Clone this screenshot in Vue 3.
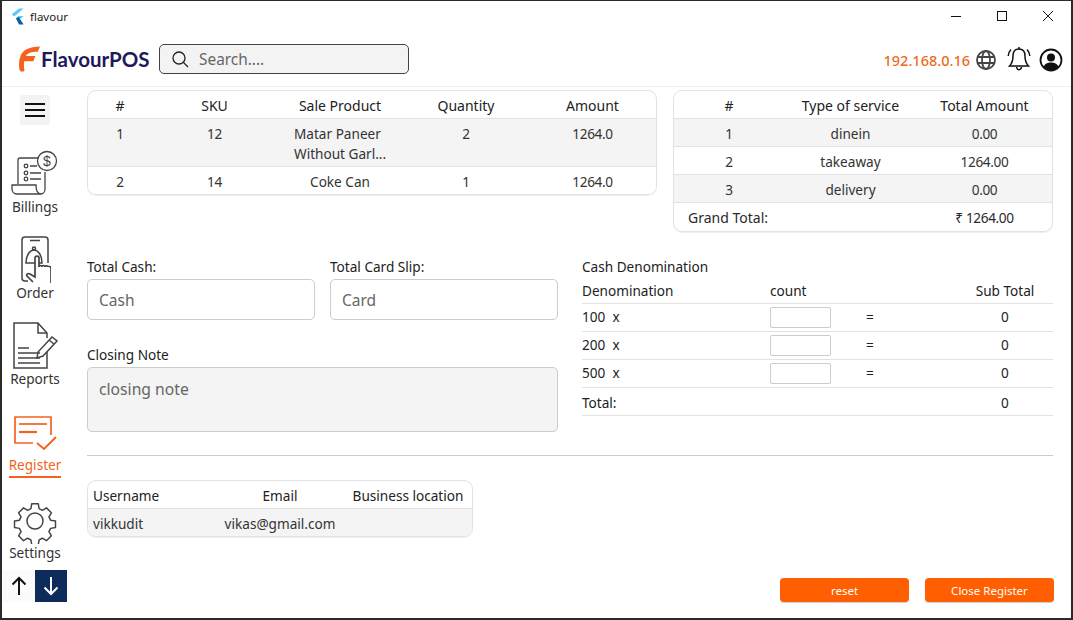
<script setup>
const sales = [
  { n: 1, sku: 12, name: 'Matar Paneer Without Garl...', qty: 2, amt: '1264.0' },
  { n: 2, sku: 14, name: 'Coke Can', qty: 1, amt: '1264.0' },
]
const services = [
  { n: 1, type: 'dinein', amt: '0.00' },
  { n: 2, type: 'takeaway', amt: '1264.00' },
  { n: 3, type: 'delivery', amt: '0.00' },
]
const denoms = [100, 200, 500]
</script>

<template>
  <div class="window">
    <div class="titlebar">
      <svg class="flutter" width="13" height="17" viewBox="0 0 13 16">
        <path d="M8 0h4.600L3.200 8 .8 5.800z" fill="#5cc8f8" />
        <path d="M8 7.400h4.600L7.400 12l-2.400-2z" fill="#5cc8f8" />
        <path d="M5 10l2.400-2 5.200 8H8z" fill="#0d5fa8" />
      </svg>
      <span class="apptitle">flavour</span>
      <div class="winctl">
        <svg width="46" height="30" viewBox="0 0 46 30"><path d="M18 15.500h10" stroke="#111" fill="none" /></svg>
        <svg width="46" height="30" viewBox="0 0 46 30"><rect x="18.500" y="10.500" width="9" height="9" stroke="#111" fill="none" /></svg>
        <svg width="46" height="30" viewBox="0 0 46 30"><path d="M18 10l10 10M28 10L18 20" stroke="#111" fill="none" /></svg>
      </div>
    </div>

    <header class="topbar">
      <div class="logo">
        <svg width="24" height="28" viewBox="0 0 24 28">
          <path d="M2.500 24.500C1.500 19 2 14 4 10 6.500 4.500 12 2.200 23 1.500l-2.200 5.300c-6.300 0-10.300 1-11.800 4.200h9.500l-2.200 5.200H7.200c-.4 3-.3 6 .3 9.300-.7 1.700-4.300 1.700-5 -1z" fill="#f4631e" />
        </svg>
        <span class="logotext">FlavourPOS</span>
      </div>
      <div class="search">
        <svg width="18" height="18" viewBox="0 0 18 18" fill="none" stroke="#222" stroke-width="1.300"><circle cx="8" cy="8" r="6" /><path d="M12.500 12.500L17 17" /></svg>
        <span>Search....</span>
      </div>
      <div class="topright">
        <span class="ip">192.168.0.16</span>
        <svg width="22" height="22" viewBox="0 0 22 22" fill="none" stroke="#444" stroke-width="1.800">
          <circle cx="11" cy="11" r="9" /><ellipse cx="11" cy="11" rx="4" ry="9" /><path d="M2.500 8h17M2.500 14h17" />
        </svg>
        <svg class="bell" width="24" height="26" viewBox="0 0 24 26" fill="none" stroke="#111" stroke-width="1.500">
          <path d="M12 3c-4 0-6 3-6 7 0 5-1.500 8-3.500 10h19C19.500 18 18 15 18 10c0-4-2-7-6-7z" />
          <path d="M12 3V1" />
          <path d="M9.500 21c.5 3.500 4.500 3.500 5 0" />
          <path d="M4 3.500C2.500 5 1.500 7 1.200 10M20 3.500c1.500 1.500 2.500 3.500 2.800 6.500" />
        </svg>
        <svg class="avatar" width="24" height="24" viewBox="0 0 24 24">
          <circle cx="12" cy="12" r="10.500" fill="none" stroke="#111" stroke-width="1.800" />
          <circle cx="12" cy="9.500" r="4" fill="#111" />
          <path d="M4.500 19c1.500-3.500 4-4.500 7.500-4.500s6 1 7.500 4.500c-2 2-4.500 3.500-7.500 3.500S6.500 21 4.500 19z" fill="#111" />
        </svg>
      </div>
    </header>

    <div class="body">
      <nav class="sidebar">
        <button class="burger" aria-label="menu">
          <svg width="22" height="16" viewBox="0 0 22 16" stroke="#111" stroke-width="2"><path d="M1 2h20M1 8h20M1 14h20" /></svg>
        </button>
        <div class="navitem">
          <svg class="navicon" width="48" height="50" viewBox="0 0 48 50" fill="none" stroke="#444" stroke-width="1.300">
            <path d="M7 36V12a2 2 0 0 1 2-2h19" />
            <path d="M34 24v17c0 3-2 5-4 5H6c-3 0-5-2-5-5v-4h24c0 5 1 9 5 9" />
            <circle cx="36" cy="13" r="9.500" />
            <text x="36" y="18" font-size="14" text-anchor="middle" fill="#444" stroke="none" font-family="Liberation Sans">$</text>
            <circle cx="15" cy="18" r="1.800" /><circle cx="15" cy="25" r="1.800" /><circle cx="15" cy="31" r="1.800" />
            <path d="M19 18h7M19 25h11M19 31h11" />
          </svg>
          <span>Billings</span>
        </div>
        <div class="navitem">
          <svg class="navicon" width="32" height="50" viewBox="0 0 32 50" fill="none" stroke="#444" stroke-width="1.500">
            <path d="M9 47H6a3 3 0 0 1-3-3V6a3 3 0 0 1 3-3h20a3 3 0 0 1 3 3v23" />
            <path d="M11 6.500h10" />
            <path d="M7 29c0-8 4-13 8-13s8 5 8 13z" />
            <circle cx="15" cy="14.500" r="1.500" />
            <path d="M14 48l-6-6c-1-2 1-3 3-2l5 3V24c0-2.500 4-2.500 4 0v9c0-2 3-2 3 0 0-2 3-2 3 0 0-1.500 3-1.500 3 0 0-1 3-.5 3 1v15" fill="#fff" stroke-width="1.700" />
          </svg>
          <span>Order</span>
        </div>
        <div class="navitem">
          <svg class="navicon" width="46" height="48" viewBox="0 0 46 48" fill="none" stroke="#444" stroke-width="1.500">
            <path d="M35 30v16H2V1h24l9 10v5" />
            <path d="M26 1v10h9" />
            <path d="M6 26h11M6 31h22M6 36h22M6 41h22" />
            <path d="M26 30l-1 6 6-2 14-15-5-4zM37 18l5 4" />
          </svg>
          <span>Reports</span>
        </div>
        <div class="navitem active">
          <svg class="navicon" width="44" height="38" viewBox="0 0 44 38" fill="none" stroke="#f4631e" stroke-width="1.700">
            <path d="M20 30H2V4h36v18" />
            <path d="M6 11h28" />
            <path d="M6 19h18" stroke-width="2.200" />
            <path d="M24 30l7 6 12-12" stroke-width="2" />
          </svg>
          <span>Register</span>
        </div>
        <div class="navitem settings">
          <svg class="navicon" width="46" height="46" viewBox="0 0 46 46" fill="none" stroke="#444" stroke-width="1.500">
            <circle cx="23" cy="23" r="8" />
            <path d="M19 2h8l1 6 4 2 5-3 6 6-3 5 2 4 6 1v8l-6 1-2 4 3 5-6 6-5-3-4 2-1 6h-8l-1-6-4-2-5 3-6-6 3-5-2-4-6-1v-8l6-1 2-4-3-5 6-6 5 3 4-2z" transform="translate(4.140 4.140) scale(.82)" stroke-width="1.800" stroke-linejoin="round" />
          </svg>
          <span>Settings</span>
        </div>
        <div class="arrows">
          <div class="arrow">
            <svg width="16" height="20" viewBox="0 0 16 20" fill="none" stroke="#111" stroke-width="2"><path d="M8 19V2M1.500 8.500L8 2l6.500 6.500" /></svg>
          </div>
          <div class="arrow down">
            <svg width="16" height="20" viewBox="0 0 16 20" fill="none" stroke="#fff" stroke-width="2"><path d="M8 1v17M1.500 11.500L8 18l6.500-6.500" /></svg>
          </div>
        </div>
      </nav>

      <main class="main">
        <div class="tables">
          <div class="card sales">
            <div class="row sales-grid head">
              <span>#</span><span>SKU</span><span>Sale Product</span><span>Quantity</span><span>Amount</span>
            </div>
            <div v-for="s in sales" :key="s.n" class="row sales-grid body-row">
              <span class="num">{{ s.n }}</span>
              <span class="num">{{ s.sku }}</span>
              <span class="prod"><em>{{ s.name }}</em></span>
              <span class="num">{{ s.qty }}</span>
              <span class="num">{{ s.amt }}</span>
            </div>
          </div>
          <div class="card services">
            <div class="row svc-grid head">
              <span>#</span><span>Type of service</span><span>Total Amount</span>
            </div>
            <div v-for="s in services" :key="s.n" class="row svc-grid body-row">
              <span class="num">{{ s.n }}</span><span>{{ s.type }}</span><span class="num">{{ s.amt }}</span>
            </div>
            <div class="row svc-grid grand">
              <span class="grandlabel">Grand Total:</span><span></span><span class="num">₹ 1264.00</span>
            </div>
          </div>
        </div>

        <div class="formarea">
          <div class="formleft">
            <div class="pair">
              <label class="field">
                <span class="lbl">Total Cash:</span>
                <input class="inp" placeholder="Cash" />
              </label>
              <label class="field">
                <span class="lbl">Total Card Slip:</span>
                <input class="inp" placeholder="Card" />
              </label>
            </div>
            <label class="field note">
              <span class="lbl">Closing Note</span>
              <textarea class="ta" placeholder="closing note"></textarea>
            </label>
          </div>
          <div class="denom">
            <div class="dtitle">Cash Denomination</div>
            <div class="drow dhead">
              <span>Denomination</span><span>count</span><span></span><span class="c">Sub Total</span>
            </div>
            <div v-for="d in denoms" :key="d" class="drow">
              <span>{{ d }}&nbsp; x</span>
              <input class="cnt" />
              <span class="eq">=</span>
              <span class="c">0</span>
            </div>
            <div class="drow dtotal">
              <span>Total:</span><span></span><span></span><span class="c">0</span>
            </div>
          </div>
        </div>

        <hr class="divider" />

        <div class="card users">
          <div class="row user-grid head">
            <span>Username</span><span class="ctr">Email</span><span class="ctr">Business location</span>
          </div>
          <div class="row user-grid body-row">
            <span>vikkudit</span><span class="ctr">vikas@gmail.com</span><span></span>
          </div>
        </div>

        <div class="actions">
          <button class="btn">reset</button>
          <button class="btn">Close Register</button>
        </div>
      </main>
    </div>
  </div>
</template>

<style>
html, body { margin: 0; background: #fff; overflow: hidden; }
</style>

<style scoped>
.window {
  width: 1073px;
  height: 620px;
  box-sizing: border-box;
  border: 1px solid #2b2b2b;
  border-width: 1px 2px 2px 2px;
  display: flex;
  flex-direction: column;
  font-family: "Noto Sans", "Liberation Sans", sans-serif;
  font-size: 13.600px;
  color: #2a2a2a;
  background: #fff;
  overflow: hidden;
}
.titlebar {
  height: 30px;
  display: flex;
  align-items: center;
  padding-left: 9px;
  flex: none;
}
.apptitle { font-size: 11.500px; margin-left: 6px; color: #222; }
.winctl { margin-left: auto; display: flex; }
.topbar {
  height: 56px;
  flex: none;
  display: flex;
  align-items: center;
  box-sizing: border-box;
  border-bottom: 1px solid #eee;
}
.logo { display: flex; align-items: center; margin-left: 15px; width: 142px; }
.logotext { font-family: Lato, sans-serif; font-weight: 700; font-size: 20.500px; color: #1d1a5c; }
.search {
  width: 250px;
  height: 30px;
  box-sizing: border-box;
  margin-top: 1px;
  border: 1px solid #444;
  border-radius: 5px;
  background: #f3f3f3;
  display: flex;
  align-items: center;
  padding-left: 11px;
  gap: 10px;
  font-size: 15.400px;
  color: #666;
}
.topright { margin-left: auto; display: flex; align-items: center; gap: 5px; margin-right: 8px; margin-top: 2px; }
.ip { color: #ef6a22; font-size: 14.500px; font-weight: 500; margin-left: 1px; }
.bell { margin-left: 5px; margin-top: -2px; }
.avatar { margin-left: 3px; }

.body { flex: 1; display: flex; min-height: 0; }
.sidebar { width: 66px; flex: none; display: flex; flex-direction: column; align-items: center; }
.burger {
  width: 30px; height: 30px; margin-top: 8px; padding: 0; border: 0; border-radius: 3px;
  background: #f3f3f3; display: flex; align-items: center; justify-content: center; margin-bottom: 22px;
}
.navitem {
  height: 86px;
  flex: none;
  display: flex;
  flex-direction: column;
  align-items: center;
  justify-content: flex-end;
  padding-bottom: 17px;
  box-sizing: border-box;
  color: #333;
}
.navitem span { line-height: 18px; }
.navicon { display: block; }
.navitem.active { color: #f4631e; }
.navitem.active .navicon { margin-bottom: 5px; }
.navitem.active span { border-bottom: 2px solid #f4631e; padding-bottom: 2px; margin-bottom: -4px; }
.settings { margin-top: 2px; }
.arrows { display: flex; margin-top: -9px; align-self: flex-start; margin-left: 1px; }
.arrow { width: 32px; height: 32px; display: flex; align-items: center; justify-content: center; background: #fbfbfb; }
.arrow.down { background: #0e2c5a; }

.main { flex: 1; min-width: 0; padding: 3px 18px 0 19px; display: flex; flex-direction: column; }
.tables { display: flex; justify-content: space-between; align-items: flex-start; }
.card { border: 1px solid #e2e2e2; border-radius: 9px; overflow: hidden; box-sizing: border-box; box-shadow: 0 1px 1px #eee; }
.sales { width: 570px; }
.services { width: 380px; }
.row { display: grid; align-items: start; text-align: center; border-bottom: 1px solid #e2e2e2; }
.row:last-child { border-bottom: 0; }
.head { font-size: 14px; color: #222; height: 27px; line-height: 30px; }
.users .head { font-size: 13.600px; }
.body-row { line-height: 20px; padding: 5px 0 2px; color: #333; }
.num { font-size: 13.600px; letter-spacing: -.35px; }
.sales .body-row:nth-child(odd), .services .body-row:nth-child(odd) { background: #fff; }
.sales .body-row:nth-child(even), .services .body-row:nth-child(even), .users .body-row { background: #f4f4f4; }
.sales-grid { grid-template-columns: 64px 125px 126px 126px 1fr; }
.svc-grid { grid-template-columns: 110px 133px 1fr; }
.prod { display: flex; justify-content: center; }
.prod em { font-style: normal; max-width: 94px; margin-left: 2px; text-align: left; }
.sales .body-row:last-child .prod em { text-align: center; margin-left: 0; }
.grand { height: 28px; line-height: 30px; }
.grandlabel { text-align: left; padding-left: 14px; white-space: nowrap; font-size: 14px; }

.formarea { display: flex; margin-top: 26px; }
.formleft { width: 471px; flex: none; }
.pair { display: flex; gap: 15px; }
.field { display: flex; flex-direction: column; flex: 1; }
.lbl { line-height: 18px; margin-bottom: 3px; color: #222; }
.inp {
  height: 41px; width: 100%; box-sizing: border-box; border: 1px solid #ccc; border-radius: 5px;
  padding: 0 11px; font: inherit; font-size: 15.500px; background: #fff; outline: none;
}
.inp::placeholder, .ta::placeholder { color: #666; opacity: 1; }
.note { margin-top: 26px; }
.ta {
  height: 65px; box-sizing: border-box; border: 1px solid #ccc; border-radius: 5px; background: #f4f4f4;
  padding: 10px 11px; font: inherit; font-size: 15.700px; resize: none; outline: none; display: block;
}
.denom { margin-left: 24px; flex: 1; }
.dtitle { line-height: 18px; margin-bottom: 6px; color: #222; }
.drow {
  display: grid; grid-template-columns: 188px 96px 1fr 96px; align-items: center; height: 28px;
  box-sizing: border-box; border-bottom: 1px solid #e2e2e2; color: #222;
}
.drow > span { margin-top: -2px; }
.dhead { height: 22px; line-height: 18px; align-items: start; }
.drow.dhead > span { margin-top: 0; }
.dtotal { padding-top: 3px; }
.c { text-align: center; white-space: nowrap; }
.cnt { width: 61px; height: 21px; box-sizing: border-box; border: 1px solid #ccc; border-radius: 2px; background: #fff; outline: none; padding: 0; }

.divider { border: 0; border-top: 1px solid #ccc; margin: 23px 0 24px; width: 100%; }
.users { width: 386px; }
.user-grid { grid-template-columns: 124px 136px 120px; }
.user-grid span:first-child { text-align: left; padding-left: 5px; }
.ctr { white-space: nowrap; }
.actions { margin-top: auto; margin-bottom: 16px; margin-right: -1px; display: flex; justify-content: flex-end; gap: 16px; }
.btn {
  width: 129px; height: 24px; padding: 0; border: 0; border-radius: 4px; background: #ff5f00; color: #fff;
  font-family: inherit; font-size: 11.500px; box-shadow: 0 1px 1px #ccc;
}
</style>
